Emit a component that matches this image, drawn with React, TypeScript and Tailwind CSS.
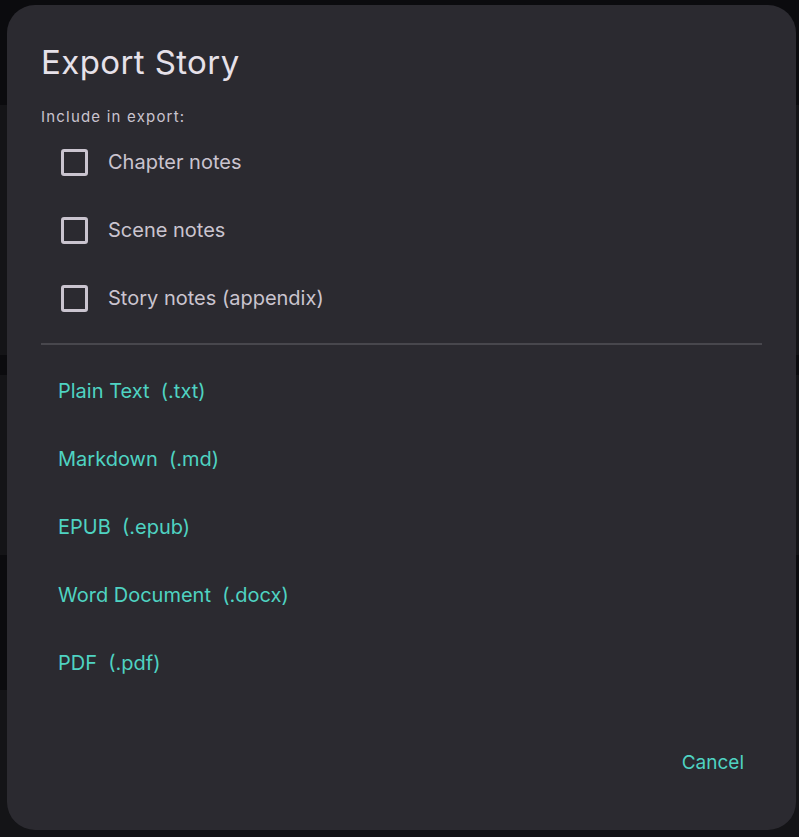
import { useState } from "react";

const options = [
  { id: "chapter", label: "Chapter notes" },
  { id: "scene", label: "Scene notes" },
  { id: "story", label: "Story notes (appendix)" },
];

const formats = [
  { name: "Plain Text", ext: "(.txt)" },
  { name: "Markdown", ext: "(.md)" },
  { name: "EPUB", ext: "(.epub)" },
  { name: "Word Document", ext: "(.docx)" },
  { name: "PDF", ext: "(.pdf)" },
];

export default function App() {
  const [checked, setChecked] = useState<Record<string, boolean>>({});

  return (
    <div
      className="relative h-[837px] w-full overflow-hidden bg-[#0b0b0e]"
      style={{ fontFamily: "Inter, 'Noto Sans', sans-serif" }}
    >
      {/* page behind the scrim */}
      <div className="flex flex-col">
        <div className="h-[105px]" />
        <div className="h-[250px] bg-[#141417]" />
        <div className="h-[20px]" />
        <div className="h-[180px] bg-[#141417]" />
        <div className="h-[135px]" />
        <div className="h-[147px] bg-[#141417]" />
      </div>

      {/* dialog */}
      <div className="absolute left-[7px] top-[5px] flex h-[825px] w-[789px] flex-col rounded-[28px] bg-[#2b2a30] px-[34px]">
        <h2 className="mt-[35px] text-[33px] leading-[44px] font-normal tracking-[0.4px] text-[#e6e1e9]">
          Export Story
        </h2>
        <p className="mt-[24px] text-[15px] leading-[18px] tracking-[1.2px] text-[#cac4cf]">Include in export:</p>

        <div className="mt-[2px] flex flex-col">
          {options.map((o) => (
            <label key={o.id} className="flex h-[68px] cursor-pointer items-center gap-[20px] pl-[20px]">
              <input
                type="checkbox"
                className="sr-only"
                checked={!!checked[o.id]}
                onChange={() => setChecked((c) => ({ ...c, [o.id]: !c[o.id] }))}
              />
              <span className="h-[27px] w-[27px] rounded-[3px] border-[3px] border-[#cac4cf]" />
              <span className="text-[20px] text-[#cac4cf]">{o.label}</span>
            </label>
          ))}
        </div>

        <div className="mt-[11px] h-[2px] bg-[#48474d]" />

        <div className="mt-[12px] flex flex-col">
          {formats.map((f) => (
            <button
              key={f.name}
              className="flex h-[68px] items-center pl-[17px] text-left text-[20px] text-[#4fd3c2]"
            >
              {f.name}&nbsp;&nbsp;{f.ext}
            </button>
          ))}
        </div>

        <div className="mt-auto mb-[53px] flex justify-end pr-[18px]">
          <button className="text-[19px] text-[#4fd3c2]">Cancel</button>
        </div>
      </div>
    </div>
  );
}
